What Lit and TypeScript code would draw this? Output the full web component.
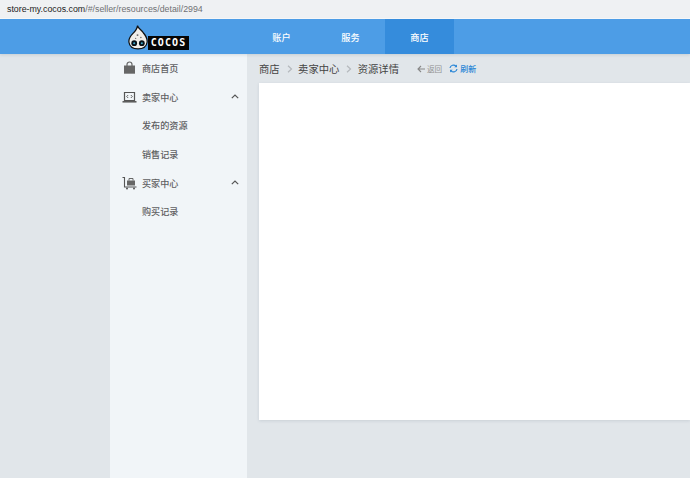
import { LitElement, html, css } from "lit";
import { customElement } from "lit/decorators.js";

const chevron = html`<svg class="chev" viewBox="0 0 8 5" width="8" height="5"><path d="M.8 4.200 4 1l3.200 3.200" fill="none" stroke="#555" stroke-width="1.200"/></svg>`;

@customElement("app-root")
export class AppRoot extends LitElement {
  static styles = css`
    :host { display: block; width: 690px; height: 478px; overflow: hidden; background: #e1e6ea; font-family: "Noto Sans CJK SC", sans-serif; }
    .urlbar { height: 18px; background: #eff1f3; color: #6f7175; font: 8.820px/18px "Liberation Sans", sans-serif; padding-left: 7px; box-sizing: border-box; }
    .urlbar b { font-weight: 400; color: #222; }
    .gap { height: 1px; background: #fbfcfd; }
    .header { height: 35px; background: #4d9de6; display: flex; position: relative; z-index: 2; box-shadow: 0 1px 3px rgba(40,60,80,.14); }
    .brand { width: 247px; box-sizing: border-box; padding: 1px 0 0 128px; display: flex; align-items: center; }
    .wordmark { width: 41px; height: 14px; margin: 11px 0 0 -1px; background: #050505; color: #fff; font: 700 10px/14px "DejaVu Sans Mono", monospace; letter-spacing: 1.100px; text-align: center; }
    .nav { width: 69px; display: flex; align-items: center; justify-content: center; color: #fff; font: 500 9.200px "Noto Sans CJK SC", sans-serif; }
    .nav.on { background: #358cdc; }
    .body { display: flex; height: 424px; padding-left: 110px; }
    .side { width: 137px; background: #f1f5f8; flex: none; }
    .row { height: 28.600px; display: flex; align-items: center; color: #5f6062; font: 500 9.100px "Noto Sans CJK SC", sans-serif; padding-left: 32px; position: relative; }
    .row.top { padding-left: 12px; }
    .ico { width: 15px; height: 14px; margin-right: 5px; flex: none; }
    .chev { position: absolute; left: 121px; top: 11.500px; }
    .main { flex: 1; min-width: 0; padding-left: 12px; }
    .crumbs { height: 29px; display: flex; align-items: center; color: #444; font: 10.300px "Noto Sans CJK SC", sans-serif; }
    .sep { width: 6px; height: 8px; margin: 0 5.500px 0 7px; }
    .back { display: flex; align-items: center; gap: 2px; margin-left: 18px; font-size: 7.600px; color: #929292; }
    .refresh { display: flex; align-items: center; gap: 2px; margin-left: 7px; font-weight: 500; font-size: 8px; color: #2a86d6; }
    .card { height: 337px; background: #fff; box-shadow: 0 1px 3px rgba(60,80,100,.14); }
  `;

  render() {
    return html`
      <div class="urlbar"><b>store-my.cocos.com</b>/#/seller/resources/detail/2994</div>
      <div class="gap"></div>
      <div class="header">
        <div class="brand">
          <svg width="21" height="27" viewBox="0 0 22 27">
            <path d="M10 1c.5 3 3 3.500 6 7.500 3 3.500 4.500 6.500 4 10-.6 4.500-4.500 7-9.500 7S1.600 23 1 18.500C.5 15 2.500 12 5 9.500 7.500 7 9.500 5 10 1z" fill="#f1eee9" stroke="#111" stroke-width="1.300"/>
            <circle cx="6.500" cy="19.500" r="3" fill="#061018"/><circle cx="14.500" cy="19.500" r="3" fill="#061018"/>
            <circle cx="6.500" cy="19.500" r="1.100" fill="#3fa6c8"/><circle cx="14.500" cy="19.500" r="1.100" fill="#3fa6c8"/>
            <circle cx="10" cy="11" r="1" fill="#666"/><circle cx="13.500" cy="13.500" r=".8" fill="#666"/><circle cx="8" cy="14.500" r=".7" fill="#777"/>
          </svg>
          <div class="wordmark">COCOS</div>
        </div>
        <div class="nav">账户</div>
        <div class="nav">服务</div>
        <div class="nav on">商店</div>
      </div>
      <div class="body">
        <div class="side">
          <div class="row top">
            <svg class="ico" viewBox="0 0 15 14"><path d="M2 4.500h11v8.200H2z" fill="#666"/><path d="M5 6V3.500a2.500 2.500 0 0 1 5 0V6" fill="none" stroke="#666" stroke-width="1.200"/></svg>
            商店首页
          </div>
          <div class="row top">
            <svg class="ico" viewBox="0 0 15 14"><path d="M2.500 2.500h10v8h-10z" fill="none" stroke="#555" stroke-width="1.200"/><path d="M.5 11.800h14" stroke="#555" stroke-width="1.500"/><path d="M6.200 5 4.700 6.500 6.200 8M8.800 5l1.500 1.500L8.800 8" fill="none" stroke="#555" stroke-width=".9"/></svg>
            卖家中心${chevron}
          </div>
          <div class="row">发布的资源</div>
          <div class="row">销售记录</div>
          <div class="row top">
            <svg class="ico" viewBox="0 0 15 14"><path d="M.5 1.500h2v9.500h12" fill="none" stroke="#555" stroke-width="1.100"/><path d="M5 4.500h8v5H5z" fill="#666"/><path d="M7 4.500V2.500h4v2" fill="none" stroke="#666"/><circle cx="5" cy="12.500" r="1" fill="#555"/><circle cx="12" cy="12.500" r="1" fill="#555"/></svg>
            买家中心${chevron}
          </div>
          <div class="row">购买记录</div>
        </div>
        <div class="main">
          <div class="crumbs">
            <span>商店</span>
            <svg class="sep" viewBox="0 0 6 8"><path d="M1 .8 4.500 4 1 7.200" fill="none" stroke="#b5b9bd" stroke-width="1.200"/></svg>
            <span>卖家中心</span>
            <svg class="sep" viewBox="0 0 6 8"><path d="M1 .8 4.500 4 1 7.200" fill="none" stroke="#b5b9bd" stroke-width="1.200"/></svg>
            <span>资源详情</span>
            <span class="back">
              <svg width="8" height="8" viewBox="0 0 8 8"><path d="M4 1 1 4l3 3M1 4h7" fill="none" stroke="#888" stroke-width="1.100"/></svg>
              返回
            </span>
            <span class="refresh">
              <svg width="9" height="9" viewBox="0 0 9 9"><path d="M1 4a3.500 3.500 0 0 1 6-1.800M8 5a3.500 3.500 0 0 1-6 1.800" fill="none" stroke="#2a86d6" stroke-width="1.200"/><path d="M8 .5V3.200H5.300zM1 8.500V5.800h2.700z" fill="#2a86d6"/></svg>
              刷新
            </span>
          </div>
          <div class="card"></div>
        </div>
      </div>
    `;
  }
}
